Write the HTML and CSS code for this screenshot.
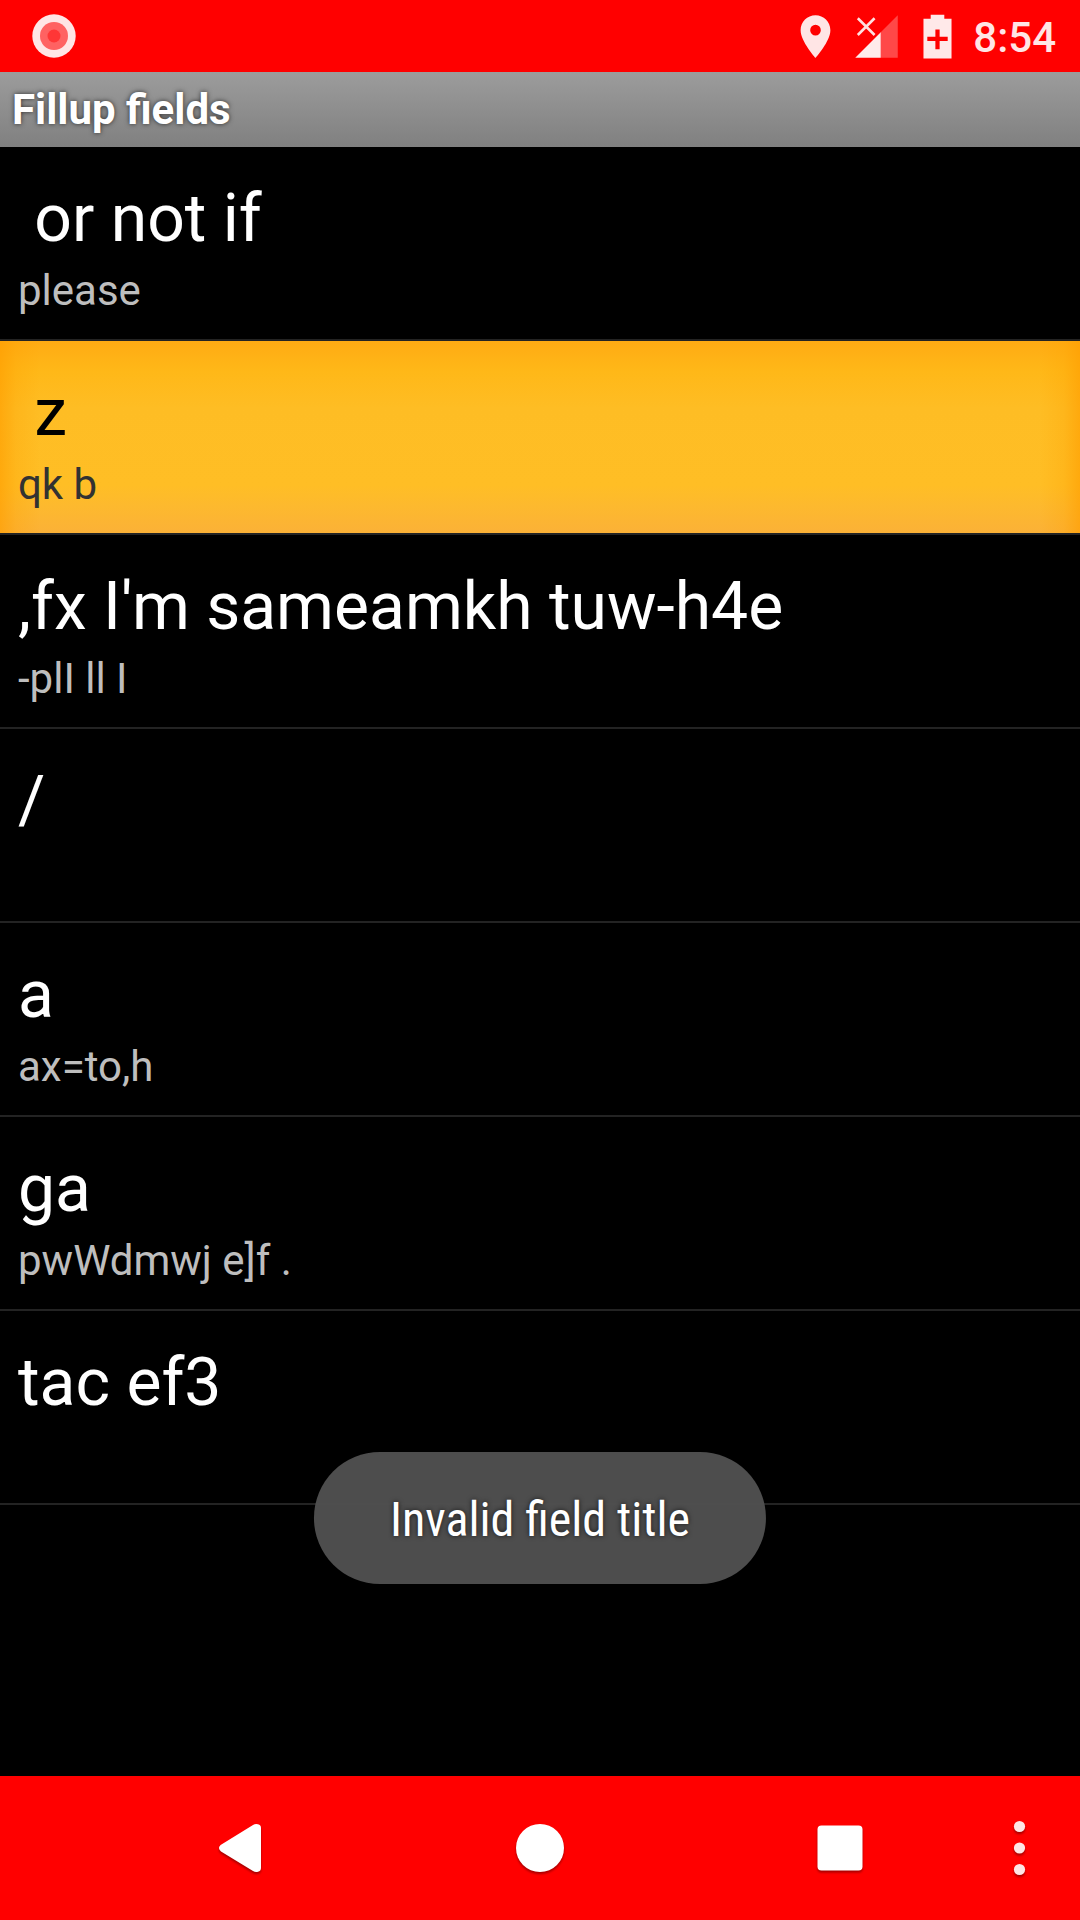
FILE: index.html
```html
<!DOCTYPE html>
<html lang="en">
<head>
<meta charset="utf-8">
<meta name="viewport" content="width=device-width, initial-scale=1">
<title>Fillup fields</title>
<link rel="stylesheet" href="styles.css">
</head>
<body>
<div class="screen">
  <div class="status-bar">
    <svg class="record-icon" viewBox="0 0 44 44" aria-hidden="true">
      <circle cx="22" cy="22" r="21.7" fill="#ffe5e5"/>
      <circle cx="22" cy="22" r="14" fill="#ff6262"/>
      <circle cx="22" cy="22" r="6.5" fill="#ff3636"/>
    </svg>
    <div class="status-icons">
      <svg class="status-icon" viewBox="0 0 24 24" aria-hidden="true">
        <path fill="#ffe5e5" d="M12 2C8.13 2 5 5.13 5 9c0 5.25 7 13 7 13s7-7.750 7-13c0-3.870-3.130-7-7-7zm0 9.500a2.500 2.500 0 1 1 0-5 2.500 2.500 0 0 1 0 5z"/>
      </svg>
      <svg class="status-icon" viewBox="0 0 24 24" aria-hidden="true">
        <path fill="#ff4848" d="M22 2v20h-8V10z"/>
        <path fill="#ffebeb" d="M2 22h12V10z"/>
        <path fill="none" stroke="#ffe0e0" stroke-width="1.200" d="M3.200 3.400l7.900 7.900M11.100 3.400l-7.900 7.900"/>
      </svg>
      <svg class="status-icon" viewBox="0 0 24 24" aria-hidden="true">
        <path fill="#ffe9e9" fill-rule="evenodd" d="M8.800 1.800h6.400v1.900h3.400v18.700H5.400V3.700h3.400zM11 8.700v3.400H7.200v2h3.800v3.900h2v-3.900h3.800v-2h-3.800V8.700z"/>
      </svg>
      <span class="clock">8:54</span>
    </div>
  </div>

  <header class="title-bar"><h1 class="title">Fillup fields</h1></header>

  <main class="content">
    <ul class="field-list">
      <li class="row"><button class="field" type="button"><span class="name"> or not if</span><span class="detail">please</span></button></li>
      <li class="row"><button class="field selected" type="button"><span class="name"> z</span><span class="detail">qk b</span></button></li>
      <li class="row"><button class="field" type="button"><span class="name">,fx I'm sameamkh tuw-h4e</span><span class="detail">-plI ll I</span></button></li>
      <li class="row"><button class="field" type="button"><span class="name">/</span><span class="detail"></span></button></li>
      <li class="row"><button class="field" type="button"><span class="name">a</span><span class="detail">ax=to,h</span></button></li>
      <li class="row"><button class="field" type="button"><span class="name">ga</span><span class="detail">pwWdmwj e]f .</span></button></li>
      <li class="row"><button class="field" type="button"><span class="name">tac ef3</span><span class="detail"></span></button></li>
    </ul>
  </main>

  <nav class="nav-bar">
    <div class="nav-main">
      <button class="nav-button" type="button" aria-label="Back">
        <svg class="nav-icon" viewBox="0 0 48 48" aria-hidden="true"><path d="M4.600 21L37 1Q39.500 -.6 42 .3Q45 1 45 4V44Q45 47 42 47.700Q39.500 48.600 37 47L5 27.500Q1.200 24 4.600 21z"/></svg>
      </button>
      <button class="nav-button" type="button" aria-label="Home">
        <svg class="nav-icon" viewBox="0 0 48 48" aria-hidden="true"><circle cx="24" cy="24" r="24"/></svg>
      </button>
      <button class="nav-button" type="button" aria-label="Recent apps">
        <svg class="nav-icon" viewBox="0 0 48 48" aria-hidden="true"><rect x="1.500" y="1.500" width="45" height="45" rx="4"/></svg>
      </button>
    </div>
    <button class="nav-button menu" type="button" aria-label="Menu">
      <svg class="menu-icon" viewBox="0 0 12 56" aria-hidden="true"><circle cx="5.500" cy="6.500" r="5.600"/><circle cx="5.500" cy="28" r="5.600"/><circle cx="5.500" cy="49.500" r="5.600"/></svg>
    </button>
  </nav>

  <div class="toast" role="status">Invalid field title</div>
</div>
</body>
</html>
```
FILE: styles.css
```css
* { box-sizing: border-box; }

body {
  margin: 0;
  background: #000;
  color: #fff;
  font-family: Roboto, "Liberation Sans", sans-serif;
}

button {
  margin: 0;
  padding: 0;
  border: 0;
  background: none;
  color: inherit;
  font: inherit;
}

.screen {
  position: relative;
  display: flex;
  flex-direction: column;
  min-height: 100vh;
}

.status-bar {
  display: flex;
  align-items: center;
  justify-content: space-between;
  height: 72px;
  padding: 0 24px 0 32px;
  background: #f00;
}

.record-icon { width: 44px; height: 44px; }

.status-icons {
  display: flex;
  align-items: center;
  gap: 10px;
}

.status-icon { width: 51px; height: 51px; }

.clock {
  padding-top: 2px;
  color: #ffe5e5;
  font-size: 42px;
  font-weight: 500;
}

.title-bar {
  display: flex;
  align-items: center;
  height: 75px;
  padding: 0 12px;
  background: linear-gradient(#9c9c9c, #808080);
}

.title {
  margin: 0;
  font-size: 42px;
  font-weight: 700;
  text-shadow: 0 0 5px rgba(0, 0, 0, 0.7);
}

.content { flex: 1; }

.field-list {
  margin: 0;
  padding: 0;
  list-style: none;
}

.row { border-bottom: 2px solid #232323; }

.field {
  display: flex;
  flex-direction: column;
  width: 100%;
  padding: 27px 18px 21px;
  text-align: left;
}

.name {
  min-height: 90px;
  font-size: 66px;
  line-height: 90px;
  white-space: pre;
}

.detail {
  min-height: 54px;
  color: #bebebe;
  font-size: 42px;
  line-height: 54px;
}

.selected {
  background:
    linear-gradient(90deg, rgba(255, 158, 0, 0.65), rgba(255, 160, 0, 0.25) 16px, rgba(255, 160, 0, 0) 40px calc(100% - 40px), rgba(255, 160, 0, 0.25) calc(100% - 16px), rgba(255, 158, 0, 0.65)),
    linear-gradient(#ffab13, #ffb818 16%, #febd24 35%, #ffbe25 75%, #fdb92e 86%, #fbb137);
  color: #000;
}

.selected .detail { color: #323232; }

.nav-bar {
  display: flex;
  height: 144px;
  padding-left: 120px;
  background: #f00;
}

.nav-main {
  display: grid;
  flex: 1;
  grid-template-columns: repeat(3, 1fr);
  gap: 60px;
}

.nav-button {
  display: flex;
  align-items: center;
  justify-content: center;
}

.nav-icon {
  width: 48px;
  height: 48px;
  overflow: visible;
  fill: #fff;
  filter: drop-shadow(0 2px 1px rgba(0, 0, 0, 0.35));
}

.menu { width: 120px; }

.menu-icon {
  width: 12px;
  height: 56px;
  overflow: visible;
  fill: #ffe5e5;
  filter: drop-shadow(0 2px 1px rgba(0, 0, 0, 0.35));
}

.toast {
  position: absolute;
  bottom: 336px;
  left: 50%;
  padding: 39px 76px 36px;
  border-radius: 66px;
  background: rgba(80, 80, 80, 0.96);
  font-family: "Roboto Condensed", Roboto, "Liberation Sans", sans-serif;
  font-size: 48px;
  line-height: 57px;
  text-shadow: 0 0 5px rgba(0, 0, 0, 0.7);
  white-space: nowrap;
  transform: translateX(-50%);
}
```
